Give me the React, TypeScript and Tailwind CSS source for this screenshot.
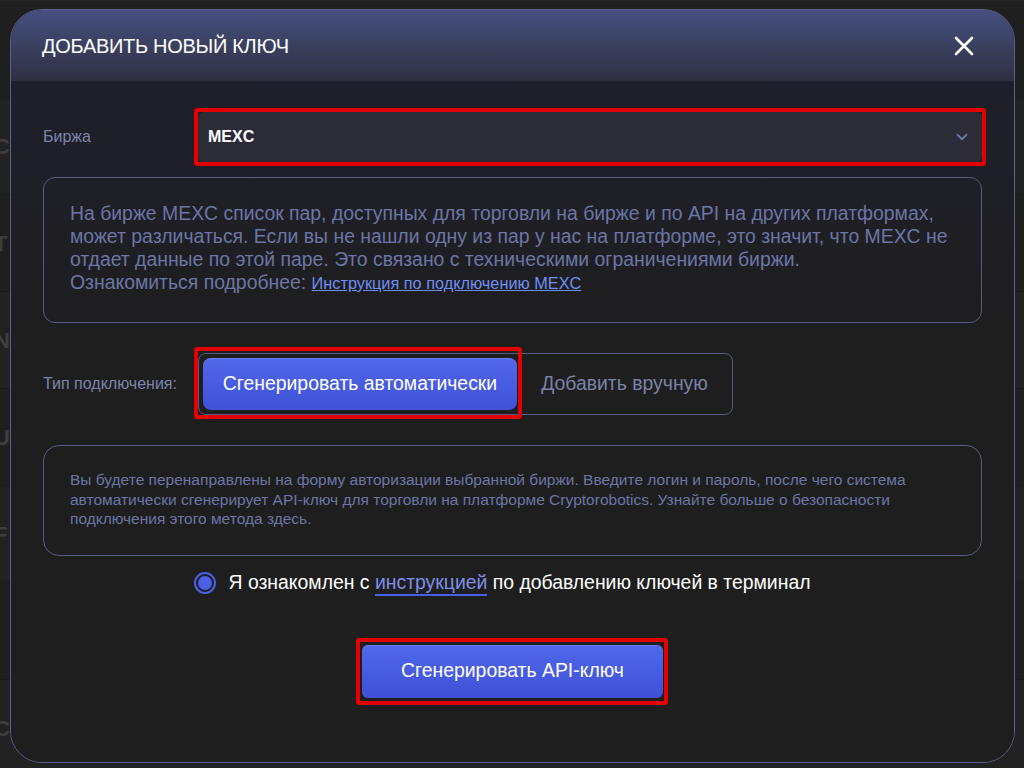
import React from 'react';

const font = "font-['Liberation_Sans',Arial,sans-serif]";

const RedFrame: React.FC<{ className: string }> = ({ className }) => (
  <div className={`pointer-events-none absolute rounded-[3px] border-4 border-[#e30000] ${className}`} />
);

const Background: React.FC = () => {
  const letters = ['', 'C', 'T', 'N', 'U', 'F', '', 'C'];
  return (
    <div className="flex h-full flex-col bg-[#1c1c1c]">
      <div className="h-[52px] overflow-hidden border-b border-[#262626] text-[17px] leading-[20px] text-[#3a3a3a]">
        <div className="-mt-[6px] whitespace-nowrap">
          и необходимо обязательно обновить данный список в настройках ключа в случае обновления списка
        </div>
        <div>ие</div>
      </div>
      <div className="flex flex-col">
        {letters.map((l, i) => (
          <div
            key={i}
            className={`flex h-[97px] items-center border-b border-[#181818] text-[22px] font-bold text-[#3e3e3e] ${
              i % 2 === 0 ? 'bg-[#1f1f1f]' : 'bg-[#222222]'
            }`}
          >
            <span className="-ml-[6px]">{l}</span>
          </div>
        ))}
      </div>
    </div>
  );
};

export default function App() {
  return (
    <div className={`relative h-[768px] w-[1024px] overflow-hidden ${font}`}>
      <Background />

      <div className="absolute left-[10px] top-[9px] flex h-[754px] w-[1005px] flex-col overflow-hidden rounded-[32px] border-[1.5px] border-[#5b6090] bg-[#1e1e1e]">
        {/* header */}
        <div className="flex h-[71px] shrink-0 items-center justify-between bg-linear-to-b from-[#465080] to-[#2f3040] pl-[31px] pr-[40px]">
          <h2 className="text-[20px] font-normal tracking-[-0.3px] text-white">ДОБАВИТЬ НОВЫЙ КЛЮЧ</h2>
          <button className="flex h-[20px] w-[20px] items-center justify-center">
            <svg width="20" height="20" viewBox="0 0 20 20" fill="none" stroke="white" strokeWidth="2.6" strokeLinecap="round">
              <line x1="2" y1="2" x2="18" y2="18" />
              <line x1="18" y1="2" x2="2" y2="18" />
            </svg>
          </button>
        </div>

        {/* body */}
        <div className="flex flex-1 flex-col bg-linear-to-b from-[#1f1f2b] to-[#1e1e1e] to-40% px-[32px] pt-[31px]">
          <div className="grid grid-cols-[155px_1fr] items-center">
            <span className="text-[16px] text-[#7d84ab]">Биржа</span>
            <div className="relative">
              <RedFrame className="-left-[4px] -right-[4px] -top-[4px] -bottom-[4px]" />
              <div className="flex h-[50px] items-center justify-between rounded-[6px] bg-[#2c2c38] pl-[10px] pr-[11px]">
                <span className="text-[16px] font-bold text-white">MEXC</span>
                <svg width="18" height="18" viewBox="0 0 24 24" fill="none" stroke="#6c77a8" strokeWidth="2.4" strokeLinecap="round" strokeLinejoin="round">
                  <polyline points="6 9 12 15 18 9" />
                </svg>
              </div>
            </div>
          </div>

          <div className="mt-[15px] rounded-xl border border-[#565c84] px-[26px] pb-[27px] pt-[24px] text-[19.4px] leading-[23px] text-[#6b76a6]">
            На бирже MEXC список пар, доступных для торговли на бирже и по API на других платформах, может различаться. Если вы не нашли одну из пар у нас на платформе, это значит, что MEXC не отдает данные по этой паре. Это связано с техническими ограничениями биржи.
            <br />
            Ознакомиться подробнее:{' '}
            <a href="#" className="text-[16.3px] text-[#6e8ff2] underline">
              Инструкция по подключению MEXC
            </a>
          </div>

          <div className="mt-[30px] grid grid-cols-[155px_1fr] items-center">
            <span className="text-[16px] text-[#7d84ab]">Тип подключения:</span>
            <div className="relative flex h-[62px] w-[535px] items-center rounded-lg border border-[#565c84] pl-[4px]">
              <RedFrame className="-left-[5px] -top-[7px] h-[72px] w-[328px]" />
              <button className="h-[52px] w-[314px] rounded-lg bg-linear-to-b from-[#5266ea] to-[#3f52d8] text-[19.4px] text-white shadow-[inset_0_1px_0_rgba(255,255,255,0.15)]">
                Сгенерировать автоматически
              </button>
              <button className="flex-1 text-center text-[19.4px] text-[#7a82a8]">Добавить вручную</button>
            </div>
          </div>

          <div className="mt-[30px] rounded-2xl border border-[#565c84] px-[26px] pb-[26px] pt-[24px] text-[15.5px] leading-[19.5px] text-[#6b76a6]">
            Вы будете перенаправлены на форму авторизации выбранной биржи. Введите логин и пароль, после чего система автоматически сгенерирует API-ключ для торговли на платформе Cryptorobotics. Узнайте больше о безопасности подключения этого метода здесь.
          </div>

          <div className="mt-[13px] flex h-[29px] items-center justify-center gap-[12px] pr-[20px]">
            <span className="flex h-[22px] w-[22px] items-center justify-center rounded-full border-2 border-[#4b5ee8]">
              <span className="h-[14px] w-[14px] rounded-full bg-[#4b5ee8]" />
            </span>
            <span className="text-[19.4px] text-white">
              Я ознакомлен с{' '}
              <a href="#" className="border-b-2 border-[#4b5ee8] pb-[1px] text-[#7f8ee8]">
                инструкцией
              </a>{' '}
              по добавлению ключей в терминал
            </span>
          </div>

          <div className="mt-[47px] flex justify-center">
            <div className="relative">
              <RedFrame className="-left-[6px] -right-[5px] -top-[7px] -bottom-[7px]" />
              <button className="h-[53px] w-[301px] rounded-[6px] bg-linear-to-b from-[#5168ec] to-[#3e50d6] text-[19.4px] text-white shadow-[inset_0_1px_0_rgba(255,255,255,0.15)]">
                Сгенерировать API-ключ
              </button>
            </div>
          </div>
        </div>
      </div>
    </div>
  );
}
